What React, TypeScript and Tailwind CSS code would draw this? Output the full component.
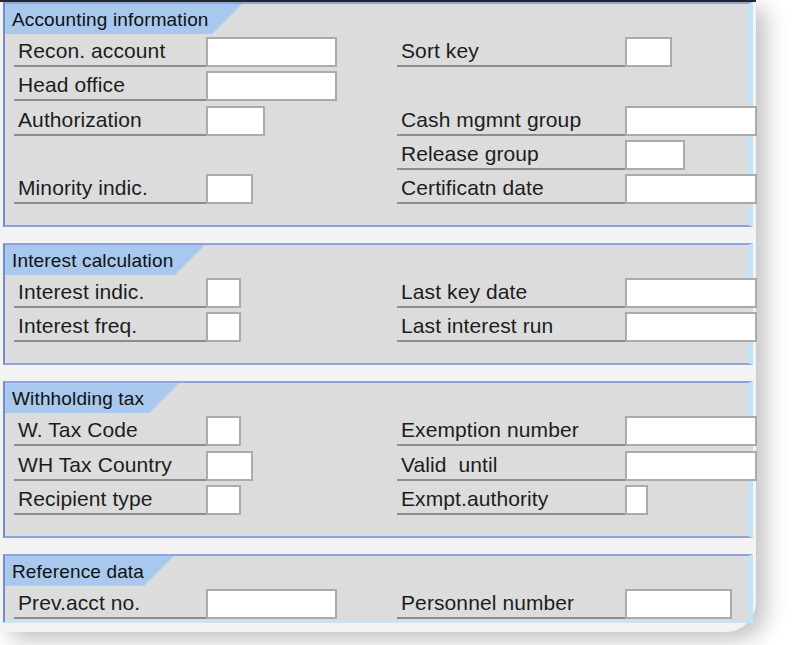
import React from "react";

type FieldDef = { label: string; w: string };
type RowDef = { left?: FieldDef; right?: FieldDef };

const font = { fontFamily: '"Liberation Sans", Arial, sans-serif' };

function Field({ field }: { field?: FieldDef }) {
  if (!field) {
    return (
      <>
        <div />
        <div />
      </>
    );
  }
  return (
    <>
      <div className="h-[30px] border-b-2 border-[#8d8d8d] pl-[4px] text-[21px] leading-[28px] tracking-[0.1px] whitespace-pre text-[#1c1c1c]">
        {field.label}
      </div>
      <div>
        <input
          readOnly
          className={`block h-[30px] ${field.w} border-2 border-[#ababab] bg-white outline-none`}
        />
      </div>
    </>
  );
}

function Panel({
  title,
  tabW,
  rows,
  pb,
  bottom,
}: {
  title: string;
  tabW: string;
  rows: RowDef[];
  pb: string;
  bottom: string;
}) {
  return (
    <section
      className={`ml-[3px] w-[750px] border-l-2 border-t-2 border-b-2 border-r-[5px] border-l-[#6f8dd0] border-t-[#8ea3db] border-r-[#c4e4f7] bg-[#dcdcdc] ${bottom} ${pb}`}
    >
      <div
        className={`h-[30px] ${tabW} bg-[#a8c8ee] pl-[7px] pt-[1px] text-[19px] leading-[30px] tracking-[0.15px] text-[#111] [clip-path:polygon(0_0,100%_0,calc(100%-30px)_100%,0_100%)]`}
      >
        {title}
      </div>
      <div className="mt-[3px] flex flex-col gap-[4.25px] pl-[9px]">
        {rows.map((r, i) => (
          <div key={i} className="grid h-[30px] grid-cols-[192px_191px_228px_auto]">
            <Field field={r.left} />
            <Field field={r.right} />
          </div>
        ))}
      </div>
    </section>
  );
}

export default function App() {
  return (
    <div className="h-[645px] w-[793px] overflow-hidden bg-white" style={font}>
      <div className="h-[632px] w-[756px] rounded-br-[30px] border-t-2 border-[#262626] bg-[#f3f3f3] shadow-[10px_8px_22px_rgba(0,0,0,0.24)]">
        <div className="flex flex-col gap-[16px]">
          <Panel
            title="Accounting information"
            tabW="w-[237px]"
            pb="pb-[21px]"
            bottom="border-b-[#8ea3db]"
            rows={[
              {
                left: { label: "Recon. account", w: "w-[131px]" },
                right: { label: "Sort key", w: "w-[47px]" },
              },
              { left: { label: "Head office", w: "w-[131px]" } },
              {
                left: { label: "Authorization", w: "w-[59px]" },
                right: { label: "Cash mgmnt group", w: "w-[132px]" },
              },
              { right: { label: "Release group", w: "w-[60px]" } },
              {
                left: { label: "Minority indic.", w: "w-[47px]" },
                right: { label: "Certificatn date", w: "w-[132px]" },
              },
            ]}
          />
          <Panel
            title="Interest calculation"
            tabW="w-[200px]"
            pb="pb-[21px]"
            bottom="border-b-[#8ea3db]"
            rows={[
              {
                left: { label: "Interest indic.", w: "w-[35px]" },
                right: { label: "Last key date", w: "w-[132px]" },
              },
              {
                left: { label: "Interest freq.", w: "w-[35px]" },
                right: { label: "Last interest run", w: "w-[132px]" },
              },
            ]}
          />
          <Panel
            title="Withholding tax"
            tabW="w-[174px]"
            pb="pb-[21px]"
            bottom="border-b-[#8ea3db]"
            rows={[
              {
                left: { label: "W. Tax Code", w: "w-[35px]" },
                right: { label: "Exemption number", w: "w-[132px]" },
              },
              {
                left: { label: "WH Tax Country", w: "w-[47px]" },
                right: { label: "Valid  until", w: "w-[132px]" },
              },
              {
                left: { label: "Recipient type", w: "w-[35px]" },
                right: { label: "Exmpt.authority", w: "w-[23px]" },
              },
            ]}
          />
          <Panel
            title="Reference data"
            tabW="w-[169px]"
            pb="pb-[2px]"
            bottom="border-b-[#c4e4f7]"
            rows={[
              {
                left: { label: "Prev.acct no.", w: "w-[131px]" },
                right: { label: "Personnel number", w: "w-[107px]" },
              },
            ]}
          />
        </div>
      </div>
    </div>
  );
}
